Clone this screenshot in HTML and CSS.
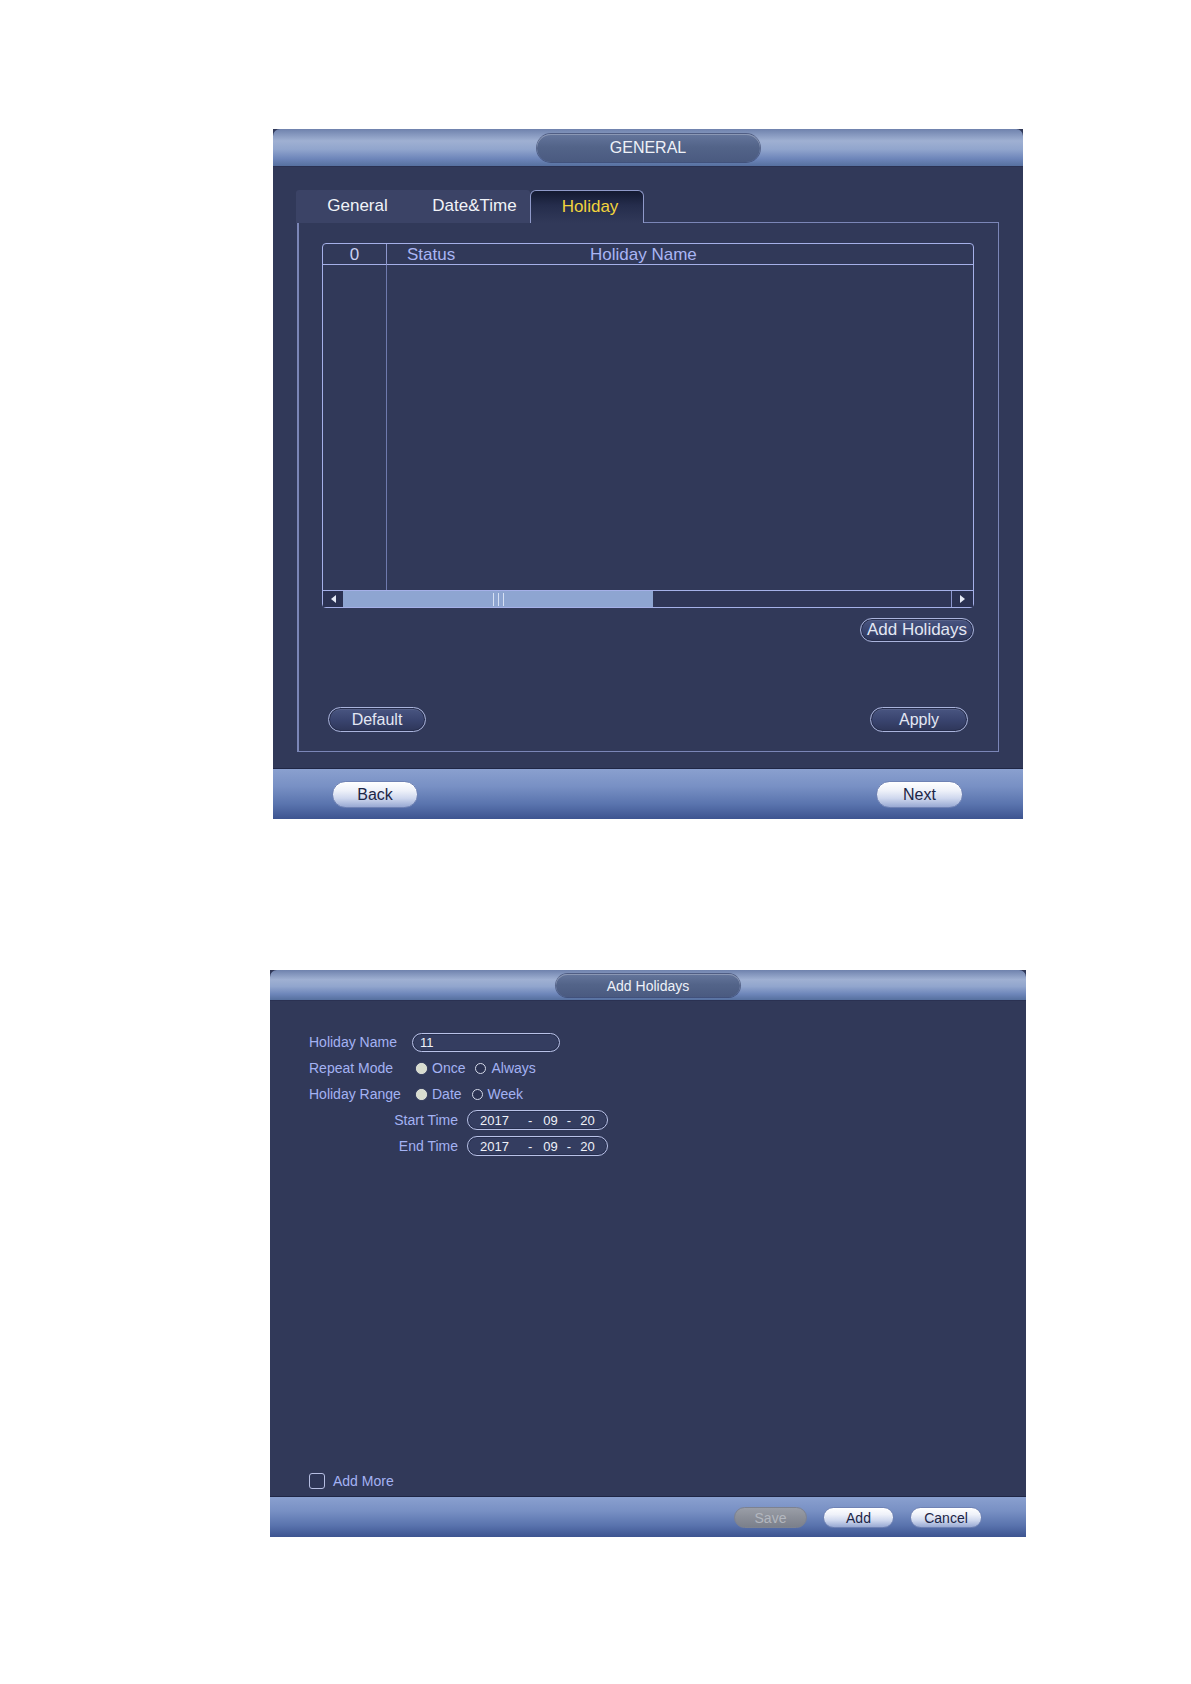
FILE: index.html
```html
<!DOCTYPE html>
<html lang="en">
<head>
<meta charset="utf-8">
<title>General - Holiday</title>
<link rel="stylesheet" href="styles.css">
</head>
<body>
<div class="page">
  <section class="win win-general">
    <header class="win-title tall">
      <div class="title-pill big">GENERAL</div>
    </header>
    <div class="win-body gen-body">
      <div class="tabs">
        <div class="tab-group">
          <div class="tab">General</div>
          <div class="tab">Date&amp;Time</div>
        </div>
        <div class="tab active">Holiday</div>
      </div>
      <div class="tab-content">
        <div class="table">
          <div class="thead">
            <div class="c0">0</div>
            <div class="c1">Status</div>
            <div class="c2">Holiday Name</div>
          </div>
          <div class="tbody">
            <div class="c0"></div>
            <div class="crest"></div>
          </div>
          <div class="hscroll">
            <div class="arrow"><span class="tri-left"></span></div>
            <div class="thumb"><span class="grip"></span><span class="grip"></span><span class="grip"></span></div>
            <div class="track"></div>
            <div class="arrow right"><span class="tri-right"></span></div>
          </div>
        </div>
        <div class="row-right">
          <button class="btn-dark add-hol">Add Holidays</button>
        </div>
        <div class="row-between">
          <button class="btn-dark wide">Default</button>
          <button class="btn-dark wide">Apply</button>
        </div>
      </div>
    </div>
    <footer class="win-foot gen-foot">
      <button class="btn-light nav back">Back</button>
      <button class="btn-light nav next">Next</button>
    </footer>
  </section>

  <section class="win win-add">
    <header class="win-title short">
      <div class="title-pill small">Add Holidays</div>
    </header>
    <div class="win-body add-body">
      <div class="form">
        <div class="frow">
          <span class="lbl">Holiday Name</span>
          <div class="field name-field">11</div>
        </div>
        <div class="frow">
          <span class="lbl">Repeat Mode</span>
          <span class="opt"><span class="radio on"></span>Once</span>
          <span class="opt"><span class="radio"></span>Always</span>
        </div>
        <div class="frow">
          <span class="lbl">Holiday Range</span>
          <span class="opt"><span class="radio on"></span>Date</span>
          <span class="opt"><span class="radio"></span>Week</span>
        </div>
        <div class="frow">
          <span class="lbl right">Start Time</span>
          <div class="field date-field"><span class="yr">2017</span><span class="dash">-</span><span class="mo">09</span><span class="dash d2">-</span><span class="dy">20</span></div>
        </div>
        <div class="frow">
          <span class="lbl right">End Time</span>
          <div class="field date-field"><span class="yr">2017</span><span class="dash">-</span><span class="mo">09</span><span class="dash d2">-</span><span class="dy">20</span></div>
        </div>
      </div>
      <label class="more">
        <span class="checkbox"></span>
        <span class="more-text">Add More</span>
      </label>
    </div>
    <footer class="win-foot add-foot">
      <button class="btn-light small-btn save" disabled>Save</button>
      <button class="btn-light small-btn add">Add</button>
      <button class="btn-light small-btn cancel">Cancel</button>
    </footer>
  </section>
</div>
</body>
</html>
```

FILE: styles.css
```css
* { box-sizing: border-box; }

html, body {
  margin: 0;
  padding: 0;
  background: #ffffff;
}

body {
  font-family: "Liberation Sans", Arial, sans-serif;
  width: 1191px;
  height: 1684px;
  overflow: hidden;
}

button {
  font-family: "Liberation Sans", Arial, sans-serif;
  padding: 0;
  margin: 0;
  cursor: default;
}

.page {
  padding-top: 129px;
}

/* ---------- window chrome ---------- */
.win {
  display: flex;
  flex-direction: column;
  background: #313959;
}

.win-general {
  width: 750px;
  height: 690px;
  margin-left: 273px;
}

.win-add {
  width: 756px;
  height: 567px;
  margin-left: 270px;
  margin-top: 151px;
}

.win-title {
  display: flex;
  justify-content: center;
  border-radius: 7px 7px 0 0;
  background: linear-gradient(#6f82ad 0%, #9fb0d2 32%, #91a5cd 55%, #6e86ba 80%, #56709f 100%);
  border-bottom: 1px solid #2a3152;
  flex: none;
}

.win-title.tall {
  height: 38px;
  padding-top: 5px;
}

.win-title.short {
  height: 31px;
  padding-top: 4px;
}

.title-pill {
  display: flex;
  align-items: center;
  justify-content: center;
  color: #eef1f8;
  border-radius: 14px;
  background: linear-gradient(#65769c 0%, #536489 45%, #4a5a80 100%);
  box-shadow: inset 0 1px 0 rgba(255,255,255,0.25), 0 0 0 1px rgba(40,50,85,0.55);
}

.title-pill.big {
  width: 223px;
  height: 28px;
  font-size: 16px;
}

.title-pill.small {
  width: 184px;
  height: 23px;
  font-size: 14px;
  border-radius: 12px;
}

.win-body {
  flex: 1;
  background: #313959;
}

.win-foot {
  flex: none;
  display: flex;
  border-top: 1px solid #1f2645;
  background: linear-gradient(#8aa0cf 0%, #7890c4 35%, #5a74ae 70%, #3d5490 100%);
}

/* ---------- General window ---------- */
.gen-body {
  padding: 23px 24px 16px 24px;
}

.tabs {
  display: flex;
  height: 33px;
  margin-bottom: -1px;
  margin-left: -1px;
  position: relative;
}

.tab-group {
  display: flex;
  background: #3b4366;
  border-radius: 3px 3px 0 0;
}

.tab {
  width: 117px;
  height: 33px;
  line-height: 32px;
  padding-left: 6px;
  text-align: center;
  font-size: 17px;
  color: #f1f3f8;
}

.tab.active {
  width: 114px;
  color: #f2d43c;
  border: 1px solid #8f99c9;
  border-bottom: none;
  border-radius: 6px 6px 0 0;
  background: linear-gradient(#131931 0%, #252d4c 45%, #313959 100%);
}

.tab-content {
  height: 530px;
  border: 1px solid #7b86b7;
  border-left-width: 2px;
  padding: 20px 24px 19px 23px;
  display: flex;
  flex-direction: column;
}

.table {
  height: 365px;
  border: 1px solid #a5b0e8;
  border-radius: 4px;
  display: flex;
  flex-direction: column;
  flex: none;
}

.thead {
  display: grid;
  grid-template-columns: 64px 203px 1fr;
  height: 21px;
  border-bottom: 1px solid #a5b0e8;
  font-size: 17px;
  line-height: 21px;
  color: #a9b5f4;
}

.thead .c0 {
  border-right: 1px solid #8d97cd;
  text-align: center;
  color: #c9d0f2;
}

.thead .c1 {
  padding-left: 20px;
}

.tbody {
  flex: 1;
  display: grid;
  grid-template-columns: 64px 1fr;
}

.tbody .c0 {
  border-right: 1px solid #6f7aae;
}

.hscroll {
  display: flex;
  height: 17px;
  border-top: 1px solid #a5b0e8;
}

.arrow {
  width: 20px;
  display: flex;
  align-items: center;
  justify-content: center;
  background: #2b3253;
}

.arrow.right {
  width: 22px;
  border-left: 1px solid #8d97cd;
}

.tri-left {
  width: 0;
  height: 0;
  border-top: 4px solid transparent;
  border-bottom: 4px solid transparent;
  border-right: 5px solid #e6eaf6;
}

.tri-right {
  width: 0;
  height: 0;
  border-top: 4px solid transparent;
  border-bottom: 4px solid transparent;
  border-left: 5px solid #e6eaf6;
}

.thumb {
  width: 310px;
  background: #8ea5d1;
  display: flex;
  justify-content: center;
  align-items: center;
  gap: 4px;
}

.grip {
  width: 1px;
  height: 13px;
  background: #d6e0f4;
}

.track {
  flex: 1;
  background: #2f3657;
}

.row-right {
  display: flex;
  justify-content: flex-end;
  margin-top: 10px;
}

.row-between {
  display: flex;
  justify-content: space-between;
  margin-top: 65px;
  padding: 0 6px;
}

.btn-dark {
  height: 25px;
  border-radius: 13px;
  border: 1px solid #aab4dc;
  background: linear-gradient(#4a5682 0%, #3a4570 50%, #2e3659 100%);
  box-shadow: inset 0 0 0 1px #262d4c, inset 0 2px 0 rgba(255,255,255,0.08);
  color: #e3e7f3;
  font-size: 16px;
}

.btn-dark.add-hol {
  width: 114px;
  height: 24px;
  font-size: 17px;
}

.btn-dark.wide {
  width: 98px;
}

.gen-foot {
  height: 51px;
  padding: 12px 60px 0 59px;
  justify-content: space-between;
  align-items: flex-start;
}

.btn-light {
  border: 1px solid #6f82b4;
  color: #1c2546;
  background: linear-gradient(#ffffff 0%, #eef1f9 35%, #cfd8ee 65%, #98a9d3 100%);
  box-shadow: inset 0 1px 0 #ffffff;
}

.btn-light.nav {
  height: 27px;
  border-radius: 14px;
  font-size: 16px;
}

.btn-light.back { width: 86px; }
.btn-light.next { width: 87px; }

/* ---------- Add Holidays window ---------- */
.add-body {
  padding: 31px 39px 7px 39px;
  display: flex;
  flex-direction: column;
  justify-content: space-between;
}

.form {
  display: flex;
  flex-direction: column;
  gap: 6px;
}

.frow {
  height: 20px;
  display: flex;
  align-items: center;
  font-size: 14px;
  color: #a4b2f3;
}

.lbl {
  width: 103px;
  flex: none;
}

.lbl.right {
  width: 149px;
  text-align: right;
  margin-right: 9px;
}

.field {
  height: 20px;
  border: 1px solid #b9c2e8;
  border-radius: 10px;
  background: #343d60;
  box-shadow: inset 0 0 0 1px #283050;
  color: #eef1f8;
  display: flex;
  align-items: center;
  font-size: 13px;
}

.name-field {
  width: 148px;
  height: 19px;
  padding-left: 7px;
}

.date-field {
  width: 141px;
  padding-left: 12px;
}

.date-field .yr { width: 29px; }
.date-field .dash { margin-left: 19px; }
.date-field .mo { margin-left: 11px; }
.date-field .dash.d2 { margin-left: 9px; }
.date-field .dy { margin-left: 9px; }

.opt {
  display: flex;
  align-items: center;
  margin-right: 10px;
}

.radio {
  width: 11px;
  height: 11px;
  border-radius: 50%;
  border: 1.5px solid #d5daea;
  margin-left: 4px;
  margin-right: 5px;
  background: #2b3252;
}

.opt + .opt .radio {
  margin-left: 0;
}

.radio.on {
  background: #d8dccf;
  border-color: #e2e5da;
  box-shadow: 0 0 1px #9aa0b0;
}

.more {
  display: flex;
  align-items: center;
  height: 16px;
}

.checkbox {
  width: 16px;
  height: 16px;
  border: 1.5px solid #b6bee2;
  border-radius: 3px;
  background: #2e3657;
}

.more-text {
  margin-left: 8px;
  font-size: 14px;
  color: #a4b2f3;
}

.add-foot {
  height: 41px;
  padding: 10px 44px 0 0;
  justify-content: flex-end;
  align-items: flex-start;
  gap: 16px;
}

.small-btn {
  height: 21px;
  border-radius: 11px;
  font-size: 14px;
}

.small-btn.save {
  width: 73px;
  color: #b3b7bf;
  border-color: #7d8290;
  background: linear-gradient(#9a9ea7 0%, #8a8e98 50%, #7b808b 100%);
  box-shadow: none;
}

.small-btn.add { width: 71px; }
.small-btn.cancel { width: 72px; }
```
